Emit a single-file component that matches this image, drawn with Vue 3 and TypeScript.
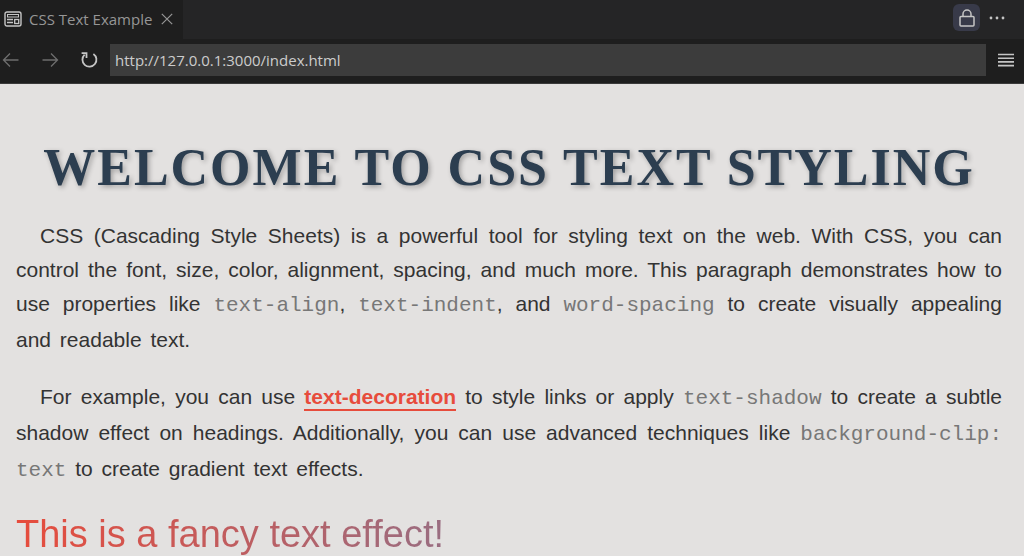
<script setup lang="ts">
import { ref } from 'vue'

const tabTitle = ref('CSS Text Example')
const address = ref('http://127.0.0.1:3000/index.html')
</script>

<template>
  <div class="window">
    <header class="chrome">
      <div class="tabs">
        <div class="tab">
          <svg class="tab-icon" viewBox="0 0 18 16" fill="none" stroke="currentColor" aria-hidden="true">
            <rect x="1" y="1" width="16" height="14" rx="2" stroke-width="1.4" />
            <rect x="3.5" y="3.5" width="11" height="2.5" />
            <path d="M3 8.5h6M3 11.5h6" stroke-width="1.3" />
            <rect x="10.7" y="8.5" width="4" height="4" stroke-width="1.3" />
          </svg>
          <span class="tab-title">{{ tabTitle }}</span>
          <button class="close" type="button" aria-label="Close tab">
            <svg viewBox="0 0 12 12" fill="none" stroke="currentColor" stroke-width="1.2">
              <path d="M.8.8l10.4 10.4M11.2.8L.8 11.2" />
            </svg>
          </button>
        </div>
        <div class="actions">
          <button class="lock" type="button" aria-label="Lock">
            <svg viewBox="0 0 16 18" fill="none" stroke="currentColor" stroke-width="1.5">
              <rect x="1" y="7.5" width="14" height="9.5" rx="1" />
              <path d="M4 7.5V5a4 4 0 0 1 8 0v2.5" />
            </svg>
          </button>
          <button class="more" type="button" aria-label="More actions">
            <svg viewBox="0 0 16 4" fill="currentColor">
              <circle cx="2" cy="2" r="1.4" />
              <circle cx="8" cy="2" r="1.4" />
              <circle cx="14" cy="2" r="1.4" />
            </svg>
          </button>
        </div>
      </div>
      <div class="toolbar">
        <button class="nav dim" type="button" aria-label="Back">
          <svg viewBox="0 0 18 16" fill="none" stroke="currentColor" stroke-width="1.3">
            <path d="M16.5 8H2M8 1.5L1.5 8 8 14.5" />
          </svg>
        </button>
        <button class="nav dim" type="button" aria-label="Forward">
          <svg viewBox="0 0 18 16" fill="none" stroke="currentColor" stroke-width="1.3">
            <path d="M1.5 8H16M10 1.5L16.5 8 10 14.5" />
          </svg>
        </button>
        <button class="nav" type="button" aria-label="Reload">
          <svg viewBox="0 0 18 16" fill="none" stroke="currentColor" stroke-width="1.8">
            <path d="M13.4 1.9A7 7 0 1 1 4.6 2.6M1.6 1.1h4.9v5" />
          </svg>
        </button>
        <input v-model="address" class="address" type="text" aria-label="Address" spellcheck="false" />
        <button class="menu" type="button" aria-label="Menu">
          <svg viewBox="0 0 16 14" fill="none" stroke="currentColor" stroke-width="1.6">
            <path d="M0 1.5h16M0 5.2h16M0 8.9h16M0 12.6h16" />
          </svg>
        </button>
      </div>
    </header>

    <main class="page">
      <h1>Welcome to CSS Text Styling</h1>
      <p>
        CSS (Cascading Style Sheets) is a powerful tool for styling text on the web. With CSS, you can
        control the font, size, color, alignment, spacing, and much more. This paragraph demonstrates how to
        use properties like <code>text-align</code>, <code>text-indent</code>, and
        <code>word-spacing</code> to create visually appealing and readable text.
      </p>
      <p>
        For example, you can use <a href="#">text-decoration</a> to style links or apply
        <code>text-shadow</code> to create a subtle shadow effect on headings. Additionally, you can use
        advanced techniques like <code>background-clip: text</code> to create gradient text effects.
      </p>
      <div class="fancy">This is a fancy text effect!</div>
    </main>
  </div>
</template>

<style>
html,
body {
  background: #e3e1e0;
  overflow: hidden;
}
</style>

<style scoped>
.window {
  font-family: "Liberation Sans", Arial, sans-serif;
  color: #333;
}

button {
  display: flex;
  align-items: center;
  justify-content: center;
  padding: 0;
  border: 0;
  background: none;
  color: inherit;
}

.chrome {
  background: #1e1e1e;
  border-bottom: 1px solid #3a3a3a;
  color: #c5c5c5;
  font-family: "Open Sans", "Noto Sans", sans-serif;
}

.tabs {
  display: flex;
  justify-content: space-between;
  height: 39px;
  background: #252526;
}

.tab {
  display: flex;
  align-items: center;
  padding: 0 10px 2px 4px;
  background: #1e1e1e;
  color: #969696;
}

.tab-icon {
  width: 18px;
  height: 16px;
  margin-right: 7px;
  color: #c5c5c5;
}

.tab-title {
  font-size: 15px;
}

.close {
  margin-left: 9px;
}

.close svg {
  width: 12px;
  height: 12px;
}

.actions {
  display: flex;
  align-items: center;
  gap: 9px;
  padding: 0 19px 4px 0;
}

.lock {
  width: 27px;
  height: 27px;
  border-radius: 6px;
  background: #383a49;
}

.lock svg {
  width: 16px;
  height: 18px;
}

.more svg {
  width: 16px;
  height: 4px;
}

.toolbar {
  display: flex;
  align-items: center;
  height: 42px;
  padding: 0 10px 2px 2px;
}

.nav {
  margin-right: 21px;
}

.nav svg {
  width: 18px;
  height: 16px;
}

.dim {
  color: #6e6e6e;
}

.nav:nth-child(3) {
  margin-right: 12px;
}

.address {
  flex: 1;
  min-width: 0;
  height: 32px;
  box-sizing: border-box;
  padding: 0 5px;
  border: 0;
  outline: 0;
  background: #3c3c3c;
  color: #ccc;
  font: 15px "Open Sans", "Noto Sans", sans-serif;
}

.menu {
  margin-left: 12px;
}

.menu svg {
  width: 16px;
  height: 14px;
}

.page {
  padding: 54px 22px 0 16px;
}

h1 {
  margin: 0 0 21px;
  font-family: "Liberation Serif", "Times New Roman", serif;
  font-size: 52px;
  line-height: 60px;
  letter-spacing: 2px;
  text-align: center;
  text-transform: uppercase;
  text-shadow: 2px 2px 5px rgba(0, 0, 0, 0.3);
  color: #2c3e50;
}

p {
  margin: 0 0 23px;
  font-size: 21px;
  line-height: 34px;
  text-align: justify;
  text-indent: 24px;
  word-spacing: 3px;
}

code {
  font-family: "Liberation Mono", "Courier New", monospace;
  font-size: 21px;
  color: #777;
}

a {
  padding-bottom: 1px;
  border-bottom: 2px solid #e74c3c;
  color: #e74c3c;
  font-weight: bold;
  text-decoration: none;
}

.fancy {
  font-size: 38px;
  line-height: 46px;
  background: linear-gradient(to right, #e74c3c, #3498db);
  -webkit-background-clip: text;
  background-clip: text;
  color: transparent;
}
</style>
